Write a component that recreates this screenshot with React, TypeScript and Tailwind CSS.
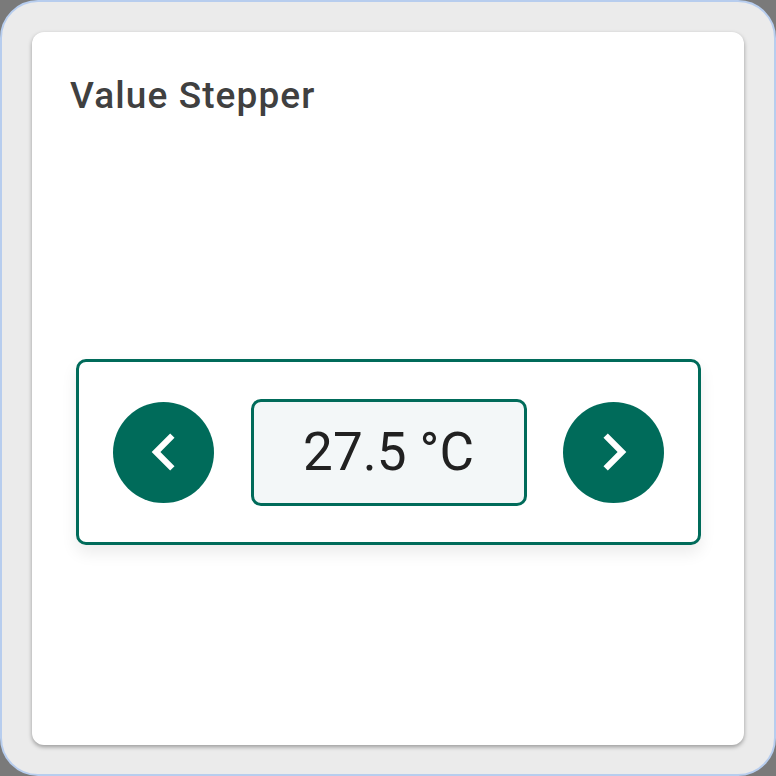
import React from "react";

function Chevron({ dir }: { dir: "left" | "right" }) {
  const d =
    dir === "left"
      ? "M15.41 7.41L14 6l-6 6 6 6 1.41-1.41L10.83 12z"
      : "M10 6L8.59 7.41 13.17 12l-4.58 4.59L10 18l6-6z";
  return (
    <svg width="74" height="74" viewBox="0 0 24 24" fill="#ffffff">
      <path d={d} />
    </svg>
  );
}

export default function App() {
  return (
    <div className="w-[776px] h-[776px] bg-[#7a7a7a]" style={{ fontFamily: "Roboto, 'Noto Sans', sans-serif" }}>
      <div className="w-full h-full rounded-[38px] border-2 border-[#b7cdee] bg-[#ebebeb] p-[30px]">
        <div className="w-[712px] h-[713px] bg-white rounded-[12px] shadow-[0_2px_4px_rgba(0,0,0,0.35)] pl-[38px] pt-[42px]">
          <div className="text-[37px] leading-[44px] font-medium text-[#404040] tracking-[0.03em]">
            Value Stepper
          </div>
          <div className="mt-[241px] ml-[6px] w-[625px] h-[186px] border-[3px] border-[#006b5a] rounded-[10px] bg-white shadow-[0_8px_16px_rgba(0,0,0,0.08)] px-[34px] flex items-center justify-between">
            <button className="w-[101px] h-[101px] rounded-full bg-[#006b5a] flex items-center justify-center">
              <Chevron dir="left" />
            </button>
            <div className="w-[276px] h-[107px] border-[3px] border-[#006b5a] rounded-[10px] bg-[#f3f7f8] flex items-center justify-center text-[53px] text-[#212121] leading-none">
              27.5 °C
            </div>
            <button className="w-[101px] h-[101px] rounded-full bg-[#006b5a] flex items-center justify-center">
              <Chevron dir="right" />
            </button>
          </div>
        </div>
      </div>
    </div>
  );
}
